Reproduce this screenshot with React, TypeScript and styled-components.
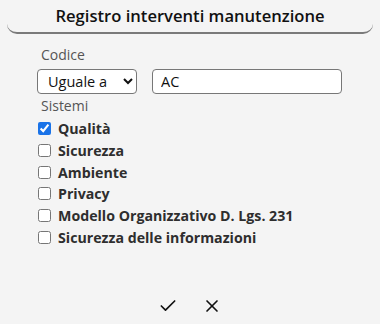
import * as React from 'react';
import styled, { createGlobalStyle } from 'styled-components';
import { Check, X } from 'lucide-react';

const GlobalStyle = createGlobalStyle`
  html, body {
    margin: 0;
    padding: 0;
    background: #f4f4f4;
  }
  body {
    font-family: "Open Sans", "Noto Sans", sans-serif;
    color: #1a1a1a;
  }
`;

const Page = styled.div`
  width: 380px;
  height: 324px;
  display: flex;
  flex-direction: column;
  box-sizing: border-box;
`;

const Header = styled.div`
  margin: 0 7px;
  height: 31px;
  padding-bottom: 1px;
  display: flex;
  align-items: center;
  justify-content: center;
  border-bottom: 2px solid #7a7a7a;
  border-radius: 0 0 10px 10px;
  font-size: 16.6px;
  font-weight: 600;
  color: #111;
`;

const Form = styled.div`
  padding: 12px 0 0 37px;
  display: flex;
  flex-direction: column;
  flex: 1;
`;

const FieldLabel = styled.div`
  font-size: 14px;
  color: #555;
  margin-left: 4px;
  line-height: 18px;
`;

const FilterRow = styled.div`
  display: flex;
  gap: 15px;
  margin: 5px 0 3px;
`;

const Select = styled.select`
  width: 100px;
  height: 25px;
  box-sizing: border-box;
  border: 1px solid #777;
  border-radius: 4px;
  background: #fff;
  font-family: inherit;
  font-size: 14.5px;
  color: #111;
  padding: 0 2px 0 6px;
`;

const TextInput = styled.input`
  width: 190px;
  height: 25px;
  box-sizing: border-box;
  border: 1px solid #777;
  border-radius: 4px;
  background: #fff;
  font-family: inherit;
  font-size: 14.5px;
  color: #111;
  padding: 0 8px;
`;

const List = styled.div`
  display: flex;
  flex-direction: column;
  margin-top: 3px;
`;

const Option = styled.label`
  display: flex;
  align-items: center;
  height: 21.7px;
  font-size: 14.2px;
  font-weight: 700;
  color: #2e2e2e;
`;

const Box = styled.input`
  width: 13px;
  height: 13px;
  margin: 0 7px 0 1px;
  accent-color: #1a73e8;
`;

const Actions = styled.div`
  display: flex;
  justify-content: center;
  gap: 24px;
  padding: 0 0 8px 0;
`;

const IconButton = styled.button`
  border: none;
  background: none;
  padding: 0;
  display: flex;
  color: #111;
  cursor: pointer;
`;

const systems = [
  { name: 'Qualità', checked: true },
  { name: 'Sicurezza', checked: false },
  { name: 'Ambiente', checked: false },
  { name: 'Privacy', checked: false },
  { name: 'Modello Organizzativo D. Lgs. 231', checked: false },
  { name: 'Sicurezza delle informazioni', checked: false },
];

export default function App() {
  return (
    <Page>
      <GlobalStyle />
      <Header>Registro interventi manutenzione</Header>
      <Form>
        <FieldLabel>Codice</FieldLabel>
        <FilterRow>
          <Select defaultValue="eq">
            <option value="eq">Uguale a</option>
          </Select>
          <TextInput defaultValue="AC" />
        </FilterRow>
        <FieldLabel>Sistemi</FieldLabel>
        <List>
          {systems.map((s) => (
            <Option key={s.name}>
              <Box type="checkbox" defaultChecked={s.checked} />
              {s.name}
            </Option>
          ))}
        </List>
      </Form>
      <Actions>
        <IconButton>
          <Check size={20} strokeWidth={2} />
        </IconButton>
        <IconButton>
          <X size={20} strokeWidth={2} />
        </IconButton>
      </Actions>
    </Page>
  );
}
